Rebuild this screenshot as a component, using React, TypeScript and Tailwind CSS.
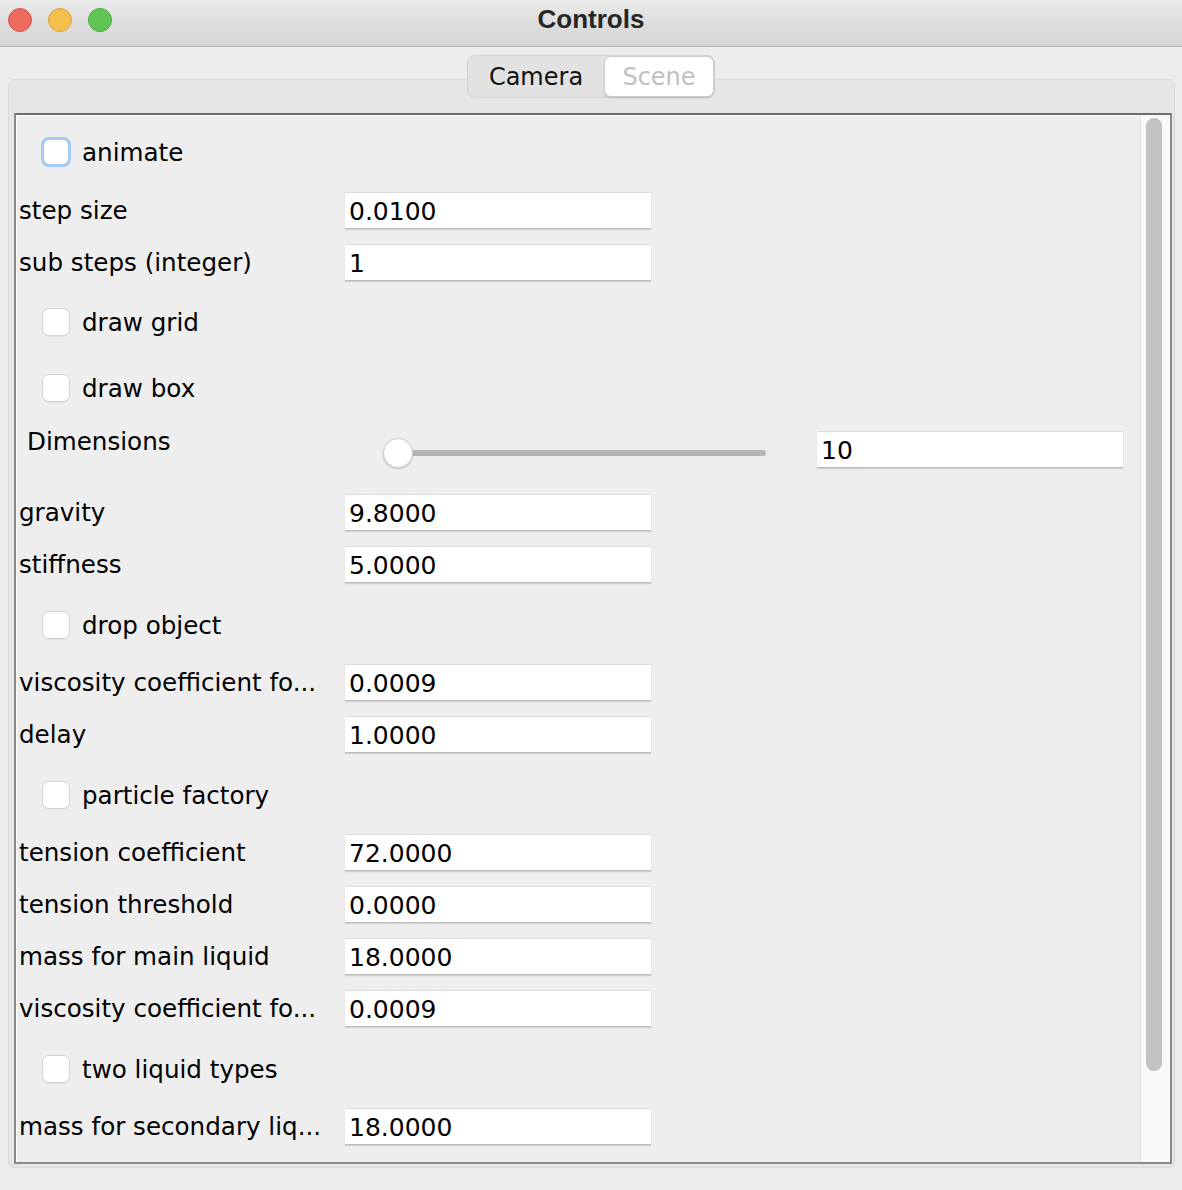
import React from "react";

type Row =
  | { kind: "check"; label: string; mt: string; focused?: boolean }
  | { kind: "field"; label: string; value: string; mt: string }
  | { kind: "slider"; label: string; value: string; mt: string };

const rows: Row[] = [
  { kind: "check", label: "animate", mt: "mt-[22px]", focused: true },
  { kind: "field", label: "step size", value: "0.0100", mt: "mt-[26px]" },
  { kind: "field", label: "sub steps (integer)", value: "1", mt: "mt-[15px]" },
  { kind: "check", label: "draw grid", mt: "mt-[27px]" },
  { kind: "check", label: "draw box", mt: "mt-[38px]" },
  { kind: "slider", label: "Dimensions", value: "10", mt: "mt-[20px]" },
  { kind: "field", label: "gravity", value: "9.8000", mt: "mt-[26px]" },
  { kind: "field", label: "stiffness", value: "5.0000", mt: "mt-[15px]" },
  { kind: "check", label: "drop object", mt: "mt-[28px]" },
  { kind: "field", label: "viscosity coefficient fo...", value: "0.0009", mt: "mt-[25px]" },
  { kind: "field", label: "delay", value: "1.0000", mt: "mt-[15px]" },
  { kind: "check", label: "particle factory", mt: "mt-[28px]" },
  { kind: "field", label: "tension coefficient", value: "72.0000", mt: "mt-[25px]" },
  { kind: "field", label: "tension threshold", value: "0.0000", mt: "mt-[15px]" },
  { kind: "field", label: "mass for main liquid", value: "18.0000", mt: "mt-[15px]" },
  { kind: "field", label: "viscosity coefficient fo...", value: "0.0009", mt: "mt-[15px]" },
  { kind: "check", label: "two liquid types", mt: "mt-[28px]" },
  { kind: "field", label: "mass for secondary liq...", value: "18.0000", mt: "mt-[25px]" },
];

function TextField({ value, className = "" }: { value: string; className?: string }) {
  return (
    <div
      className={`flex h-[37px] w-[306px] items-center border-t border-b border-t-[#dcdcdc] border-b-[#bdbdbd] bg-white pl-[4px] pt-[2px] text-[25px] leading-none text-black shadow-[0_1px_1px_rgba(0,0,0,0.12)] ${className}`}
    >
      {value}
    </div>
  );
}

function Checkbox({ focused }: { focused?: boolean }) {
  if (focused) {
    return (
      <div className="h-[30px] w-[30px] rounded-[8px] border-[3px] border-[#a3c8f6] bg-white" />
    );
  }
  return (
    <div className="h-[28px] w-[28px] rounded-[7px] border border-[#d2d2d2] bg-white shadow-[0_1px_1px_rgba(0,0,0,0.05)]" />
  );
}

function App() {
  return (
    <div
      className="flex h-[1190px] w-[1182px] flex-col overflow-hidden bg-[#ececec] text-black"
      style={{ fontFamily: '"DejaVu Sans", sans-serif' }}
    >
      {/* title bar */}
      <div className="grid h-[47px] grid-cols-[1fr_auto_1fr] border-b border-[#b4b4b4] bg-gradient-to-b from-[#e9e9e9] to-[#d4d4d4]">
        <div className="flex items-start gap-[16px] pl-[8px] pt-[8px]">
          <div className="h-[24px] w-[24px] rounded-full border border-[#d9574c] bg-[#ee6a5e]" />
          <div className="h-[24px] w-[24px] rounded-full border border-[#dca23d] bg-[#f5bf4f]" />
          <div className="h-[24px] w-[24px] rounded-full border border-[#4fa83f] bg-[#61c554]" />
        </div>
        <div
          className="pt-[0px] text-[26px] font-bold text-[#262626]"
          style={{ fontFamily: '"Liberation Sans", Arial, sans-serif' }}
        >
          Controls
        </div>
        <div />
      </div>

      {/* tabs */}
      <div className="relative z-10 mt-[8px] flex justify-center">
        <div className="flex h-[43px] rounded-[8px] border border-[#d4d4d4] bg-[#e2e2e2] text-[24px]">
          <div className="flex w-[136px] items-center justify-center pt-[1px] text-[#111]">Camera</div>
          <div
            className="flex w-[110px] items-center justify-center rounded-[7px] border border-[#cfcfcf] bg-white pt-[1px] text-[#c0c0c0] shadow-[0_1px_2px_rgba(0,0,0,0.15)]"
            style={{ textShadow: "0 1px 0 #ffffff" }}
          >
            Scene
          </div>
        </div>
      </div>

      {/* tab panel */}
      <div className="-mt-[19px] ml-[8px] flex h-[1089px] w-[1167px] flex-col rounded-[7px] border border-[#dadada] bg-[#e6e6e6] pb-[3px] pl-[5px] pr-[2px] pt-[33px]">
        <div className="flex flex-1 border-2 border-[#8a8a8a] border-t-[#6d6d6d] bg-[#eeeeee]">
          {/* content */}
          <div className="flex flex-1 flex-col border-l border-t border-white">
            {rows.map((r, i) => {
              if (r.kind === "check") {
                return (
                  <div
                    key={i}
                    className={`flex h-[28px] items-center ${r.mt} ${r.focused ? "pl-[24px]" : "pl-[25px]"}`}
                  >
                    <Checkbox focused={r.focused} />
                    <span
                      className={`pt-[2px] text-[24.6px] leading-none ${r.focused ? "ml-[11px]" : "ml-[12px]"}`}
                    >
                      {r.label}
                    </span>
                  </div>
                );
              }
              if (r.kind === "slider") {
                return (
                  <div key={i} className={`flex h-[46px] items-start ${r.mt}`}>
                    <div className="mt-[5px] w-[366px] pl-[10px] text-[24.6px] leading-[30px]">{r.label}</div>
                    <div className="mt-[16px] flex h-[30px] w-[383px] items-center">
                      <div className="relative z-10 h-[30px] w-[30px] rounded-full border border-[#d0d0d0] bg-white shadow-[0_1px_2px_rgba(0,0,0,0.2)]" />
                      <div className="h-[6px] flex-1 rounded-r-[3px] bg-[#b6b6b6]" />
                    </div>
                    <TextField value={r.value} className="ml-[51px] mt-[9px]" />
                  </div>
                );
              }
              return (
                <div key={i} className={`flex h-[37px] items-center ${r.mt}`}>
                  <div className="w-[328px] whitespace-nowrap pl-[2px] pt-[2px] text-[24.6px] leading-none">
                    {r.label}
                  </div>
                  <TextField value={r.value} />
                </div>
              );
            })}
          </div>

          {/* scrollbar */}
          <div className="w-[30px] border-l border-[#e4e4e4] bg-[#f9f9f9] pl-[5px] pt-[3px]">
            <div className="h-[953px] w-[16px] rounded-full bg-[#c2c2c2]" />
          </div>
        </div>
      </div>
    </div>
  );
}

export default App;
